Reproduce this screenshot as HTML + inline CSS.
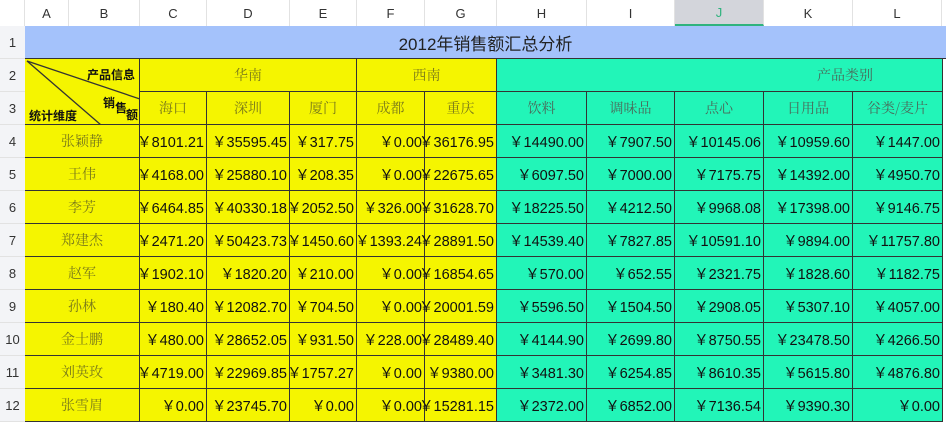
<!DOCTYPE html>
<html><head><meta charset="utf-8"><style>
body{margin:0;width:946px;height:425px;background:#fff;position:relative;overflow:hidden;font-family:"Liberation Sans","Noto Sans CJK SC",sans-serif}
.a{position:absolute;box-sizing:border-box;display:flex;align-items:center}
.h{color:#333;font-size:13px;justify-content:center;background:#fff;border-right:1px solid #e2e2e2}
.r{color:#333;font-size:13px;justify-content:center;background:#f3f4f7;border-bottom:1px solid #e2e2e2}
.c{border-right:1.5px solid #333;border-bottom:1.5px solid #333;font-size:14.5px;color:#111;justify-content:flex-end;padding-right:2px;white-space:nowrap}
.y{background:#f5f500}.g{background:#22f5b8}
.t{justify-content:center;font-family:"Noto Serif CJK SC",serif;color:#7a7a1a;font-size:14px;padding:0}
.tg{color:#4a6a5a}
</style></head><body>
<div id="hd"></div>
<script>
var cols=[25,69,140,207,290,357,425,497,587,675,764,853,942];
var names="ABCDEFGHIJKL";
var rows=[26,59,92,125,158,191,224,257,290,323,356,389,422];
var s="";
s+='<div class="a h" style="left:0;top:0;width:25px;height:26px;background:#fff"></div>';
for(var i=0;i<12;i++){var bg=i==9?'background:#d3d5db;border-bottom:2px solid #2fb37e;color:#2fb37e;':'';s+='<div class="a h" style="left:'+cols[i]+'px;top:0;width:'+(cols[i+1]-cols[i])+'px;height:26px;'+bg+'">'+names[i]+'</div>';}
for(var r=0;r<12;r++){s+='<div class="a r" style="left:0;top:'+rows[r]+'px;width:25px;height:'+(rows[r+1]-rows[r])+'px">'+(r+1)+'</div>';}
s+='<div class="a" style="left:25px;top:26px;width:921px;height:33px;background:#a4c2fb;border-bottom:1.5px solid #333;justify-content:center;font-size:17px;color:#222">2012年销售额汇总分析</div>';
function cell(x0,x1,y0,y1,cls,txt){s+='<div class="a c '+cls+'" style="left:'+x0+'px;top:'+y0+'px;width:'+(x1-x0)+'px;height:'+(y1-y0)+'px">'+txt+'</div>';}
cell(25,140,59,125,'y','');
cell(140,357,59,92,'y t','华南');
cell(357,497,59,92,'y t','西南');
cell(497,943,59,92,'g t tg','<span style="position:absolute;left:320px">产品类别</span>');
var h3=["海口","深圳","厦门","成都","重庆","饮料","调味品","点心","日用品","谷类/麦片"];
for(var i=0;i<10;i++)cell(cols[i+2],cols[i+3]+(i==9?1:0),92,125,(i<5?'y t':'g t tg'),h3[i]);
var data=[
["张颖静","8101.21","35595.45","317.75","0.00","36176.95","14490.00","7907.50","10145.06","10959.60","1447.00"],
["王伟","4168.00","25880.10","208.35","0.00","22675.65","6097.50","7000.00","7175.75","14392.00","4950.70"],
["李芳","6464.85","40330.18","2052.50","326.00","31628.70","18225.50","4212.50","9968.08","17398.00","9146.75"],
["郑建杰","2471.20","50423.73","1450.60","1393.24","28891.50","14539.40","7827.85","10591.10","9894.00","11757.80"],
["赵军","1902.10","1820.20","210.00","0.00","16854.65","570.00","652.55","2321.75","1828.60","1182.75"],
["孙林","180.40","12082.70","704.50","0.00","20001.59","5596.50","1504.50","2908.05","5307.10","4057.00"],
["金士鹏","480.00","28652.05","931.50","228.00","28489.40","4144.90","2699.80","8750.55","23478.50","4266.50"],
["刘英玫","4719.00","22969.85","1757.27","0.00","9380.00","3481.30","6254.85","8610.35","5615.80","4876.80"],
["张雪眉","0.00","23745.70","0.00","0.00","15281.15","2372.00","6852.00","7136.54","9390.30","0.00"]];
for(var r=0;r<9;r++){var y0=rows[r+3],y1=rows[r+4];
cell(25,140,y0,y1,'y t',data[r][0]);
for(var i=1;i<11;i++)cell(cols[i+1],cols[i+2]+(i==10?1:0),y0,y1,i<6?'y':'g','￥'+data[r][i]);}
document.getElementById('hd').outerHTML=s;
</script>
<svg style="position:absolute;left:25px;top:59px" width="115" height="66">
<line x1="2" y1="2" x2="115" y2="40" stroke="#333" stroke-width="1.3"/>
<line x1="2" y1="2" x2="76" y2="66" stroke="#333" stroke-width="1.3"/>
<text x="110" y="20" text-anchor="end" font-size="12" font-weight="bold" font-family="Noto Sans CJK SC,sans-serif" fill="#111">产品信息</text>
<text x="4" y="61" font-size="12" font-weight="bold" font-family="Noto Sans CJK SC,sans-serif" fill="#111">统计维度</text>
<text x="78" y="48" font-size="12" font-weight="bold" font-family="Noto Sans CJK SC,sans-serif" fill="#111">销</text>
<text x="90" y="53" font-size="12" font-weight="bold" font-family="Noto Sans CJK SC,sans-serif" fill="#111">售</text>
<text x="101" y="60" font-size="12" font-weight="bold" font-family="Noto Sans CJK SC,sans-serif" fill="#111">额</text>
</svg>
</body></html>
